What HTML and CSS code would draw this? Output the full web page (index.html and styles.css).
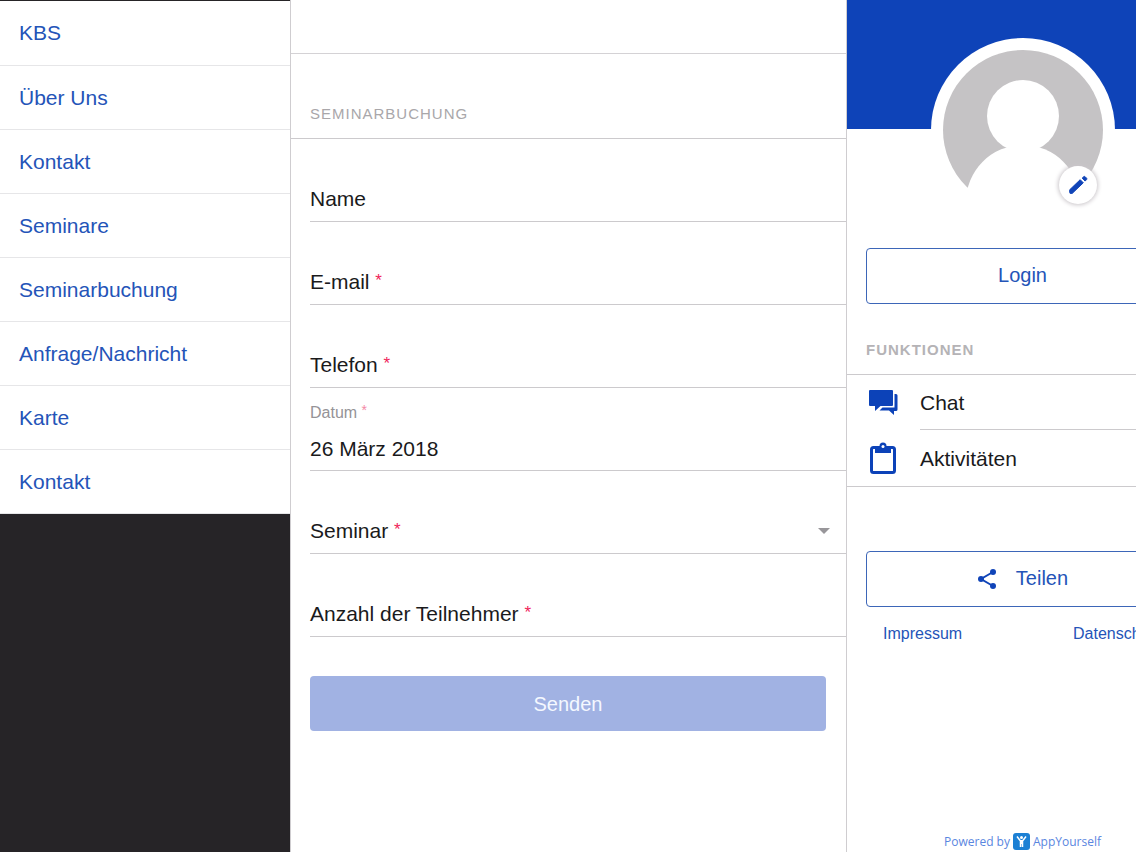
FILE: index.html
```html
<!DOCTYPE html>
<html lang="de">

<head>
    <meta charset="UTF-8">
    <meta name="viewport" content="width=device-width, initial-scale=1.0">
    <title>Seminarbuchung</title>
    <link rel="stylesheet" href="styles.css">
</head>

<body>
    <nav class="menu">
        <a href="#">KBS</a>
        <a href="#">Über Uns</a>
        <a href="#">Kontakt</a>
        <a href="#">Seminare</a>
        <a href="#">Seminarbuchung</a>
        <a href="#">Anfrage/Nachricht</a>
        <a href="#">Karte</a>
        <a href="#">Kontakt</a>
    </nav>

    <main class="content">
        <header class="topbar"></header>
        <h2 class="section-title form-title">Seminarbuchung</h2>

        <form>
            <div class="field">
                <label for="name">Name</label>
                <input type="text" id="name">
            </div>
            <div class="field">
                <label for="email">E-mail <span class="required">*</span></label>
                <input type="email" id="email">
            </div>
            <div class="field">
                <label for="phone">Telefon <span class="required">*</span></label>
                <input type="tel" id="phone">
            </div>
            <div class="field filled">
                <label for="date">Datum <span class="required">*</span></label>
                <input type="text" id="date" value="26 März 2018">
            </div>
            <div class="field">
                <label for="seminar">Seminar <span class="required">*</span></label>
                <select id="seminar">
                    <option value=""></option>
                </select>
                <span class="arrow"></span>
            </div>
            <div class="field">
                <label for="count">Anzahl der Teilnehmer <span class="required">*</span></label>
                <input type="text" id="count">
            </div>
            <button type="submit" class="send" disabled>Senden</button>
        </form>
    </main>

    <aside class="side">
        <div class="panel">
            <div class="cover">
                <div class="avatar">
                    <svg width="160" height="160" viewBox="0 0 160 160">
                        <circle cx="80" cy="80" r="80" fill="#c5c3c5" />
                        <circle cx="80" cy="66" r="36" fill="#fff" />
                        <circle cx="80" cy="152" r="57" fill="#fff" />
                    </svg>
                    <button type="button" class="edit" aria-label="Bearbeiten">
                        <svg width="24" height="24" viewBox="0 0 24 24">
                            <path d="M3.6 18.2 4 20.3 6.2 20.4 17.3 9.8 14.2 6.7 3.9 16.6z" fill="#1044b8" stroke="#1044b8" stroke-width="1" stroke-linejoin="round" />
                            <path d="M16.2 5.1 17.7 3.7q.7-.6 1.4 0l1.5 1.5q.6.7 0 1.4l-1.5 1.5z" fill="#1044b8" stroke="#1044b8" stroke-width="1" stroke-linejoin="round" />
                        </svg>
                    </button>
                </div>
            </div>

            <button type="button" class="outline login">Login</button>

            <h2 class="section-title">Funktionen</h2>
            <div class="functions">
                <a href="#">
                    <svg width="30" height="30" viewBox="0 0 30 30">
                        <path d="M2 2h22q1 0 1 1v14q0 1-1 1H12.500L7 23v-5H2q-1 0-1-1V3q0-1 1-1z" fill="#0c42b8" />
                        <path d="M26.500 6H28q1.500 0 1.500 1.500v14q0 1.500-1.500 1.500h-2v4l-5-4.500h-9.500l3-3h12z" fill="#0c42b8" />
                    </svg>
                    <span>Chat</span>
                </a>
                <a href="#">
                    <svg width="30" height="34" viewBox="0 0 30 34">
                        <rect x="3.500" y="6.500" width="23" height="25" rx="2" fill="none" stroke="#0c42b8" stroke-width="3" />
                        <path d="M7 5h4.500a3.500 3.500 0 0 1 7 0H23v7H7z" fill="#0c42b8" />
                        <circle cx="15" cy="5.500" r="1.500" fill="#fff" />
                    </svg>
                    <span>Aktivitäten</span>
                </a>
            </div>

            <button type="button" class="outline share">
                <svg width="20" height="20" viewBox="0 0 20 20">
                    <path d="M16 3 4 10l12 7" fill="none" stroke="#1044b8" stroke-width="2" />
                    <circle cx="16" cy="3" r="3" fill="#1044b8" />
                    <circle cx="4" cy="10" r="3" fill="#1044b8" />
                    <circle cx="16" cy="17" r="3" fill="#1044b8" />
                </svg>
                Teilen
            </button>

            <div class="legal">
                <a href="#">Impressum</a>
                <a href="#">Datenschutz</a>
            </div>

            <footer class="powered">
                <span>Powered by</span>
                <svg width="17" height="17" viewBox="0 0 17 17">
                    <rect width="17" height="17" rx="3" fill="#1c80d4" />
                    <circle cx="8.500" cy="4.500" r="1.500" fill="#fff" />
                    <path d="M4 3.500 7.500 8v6M13 3.500 9.500 8v6M8.500 7v4" fill="none" stroke="#fff" stroke-width="1.500" />
                </svg>
                <strong>AppYourself</strong>
            </footer>
        </div>
    </aside>
</body>

</html>
```
FILE: styles.css
```css
* {
    box-sizing: border-box;
}

body {
    margin: 0;
    display: flex;
    height: 100vh;
    overflow: hidden;
    background-color: #fff;
    color: #1a1a1c;
    font-family: "Liberation Sans", Arial, sans-serif;
    font-size: 21px;
}

a {
    color: #2454b8;
    text-decoration: none;
}

button,
input,
select {
    font-family: inherit;
    font-size: inherit;
}

/* left menu */
.menu {
    flex: 0 0 290px;
    background-color: #262427;
    border-top: 1px solid #262427;
}

.menu a {
    display: flex;
    align-items: center;
    height: 64px;
    padding: 0 19px;
    background-color: #fff;
    border-bottom: 1px solid #e6e6e8;
}

.menu a:first-child {
    height: 65px;
}

/* form */
.content {
    flex: 1;
    min-width: 0;
    border-left: 1px solid #cfcdd0;
}

.topbar {
    height: 54px;
    border-bottom: 1px solid #d4d2d5;
}

.section-title {
    margin: 0;
    padding: 0 19px;
    color: #b5b3b6;
    font-size: 15px;
    font-weight: bold;
    letter-spacing: 1px;
    line-height: 49px;
    text-transform: uppercase;
    border-bottom: 1px solid #cccacd;
}

.form-title {
    padding-top: 35px;
    font-weight: normal;
    color: #a9a7aa;
}

form {
    padding-left: 19px;
}

.field {
    display: grid;
    height: 83px;
    padding-top: 38px;
    border-bottom: 1px solid #cccacd;
}

.field label,
.field input,
.field select,
.field .arrow {
    grid-area: 1 / 1;
}

.field label {
    align-self: start;
    line-height: 44px;
    pointer-events: none;
    z-index: 1;
}

.field input,
.field select {
    width: 100%;
    height: 44px;
    padding: 0;
    border: none;
    outline: none;
    background: none;
    color: inherit;
    appearance: none;
}

.required {
    color: #f0245a;
    font-size: 17px;
    line-height: 1;
    vertical-align: 3px;
}

.field.filled {
    grid-template-rows: 33px 48px;
    padding-top: 8px;
}

.field.filled label {
    color: #959397;
    font-size: 16px;
    line-height: 34px;
}

.field.filled input {
    grid-area: 2 / 1;
    height: 40px;
}

.filled .required {
    color: #f48aa6;
    font-size: 14px;
}

.arrow {
    align-self: center;
    justify-self: end;
    margin-right: 16px;
    border-left: 6px solid transparent;
    border-right: 6px solid transparent;
    border-top: 6px solid #98969a;
    pointer-events: none;
}

.send {
    display: block;
    width: calc(100% - 20px);
    height: 55px;
    margin-top: 39px;
    padding-top: 3px;
    border: none;
    border-radius: 4px;
    background-color: #a1b2e3;
    color: #f4f8ff;
    font-size: 20px;
}

/* right panel, wider than the visible part */
.side {
    flex: 0 0 290px;
    overflow: hidden;
    border-left: 1px solid #cfcdd0;
}

.panel {
    display: flex;
    flex-direction: column;
    width: 351px;
    height: 100%;
}

.cover {
    height: 129px;
    padding-top: 38px;
    background-color: #0e43b8;
}

.avatar {
    position: relative;
    width: 184px;
    height: 184px;
    margin: 0 auto;
    padding: 12px;
    border-radius: 50%;
    background-color: #fff;
}

.avatar svg {
    display: block;
}

.edit {
    position: absolute;
    right: 18px;
    bottom: 18px;
    display: flex;
    align-items: center;
    justify-content: center;
    width: 38px;
    height: 38px;
    padding: 0;
    border: none;
    border-radius: 50%;
    background-color: #fff;
    box-shadow: 0 0 4px 1px #cac6ca;
}

.outline {
    display: flex;
    align-items: center;
    justify-content: center;
    gap: 19px;
    height: 56px;
    margin: 0 19px;
    padding-bottom: 2px;
    border: 1px solid #3d66b8;
    border-radius: 4px;
    background-color: #fff;
    color: #2454b8;
    font-size: 20px;
}

.login {
    margin-top: 119px;
    margin-bottom: 21px;
}

.functions {
    border-bottom: 1px solid #cccacd;
}

.functions a {
    display: flex;
    align-items: center;
    gap: 22px;
    height: 55px;
    padding-left: 21px;
    color: inherit;
}

.functions span {
    flex: 1;
    padding-top: 2px;
    line-height: 52px;
    border-bottom: 1px solid #cccacd;
}

.functions a:last-child {
    height: 56px;
}

.functions a:last-child span {
    border-bottom: none;
}

.share {
    margin-top: 64px;
}

.legal {
    display: flex;
    justify-content: space-between;
    padding: 18px 36px;
    font-size: 16px;
    line-height: 18px;
}

.powered {
    display: flex;
    align-items: center;
    justify-content: center;
    gap: 3px;
    margin-top: auto;
    padding-bottom: 2px;
    color: #5a86e0;
    font-family: "Open Sans", sans-serif;
    font-size: 12px;
    line-height: 17px;
}

.powered strong {
    font-weight: 500;
}
```
